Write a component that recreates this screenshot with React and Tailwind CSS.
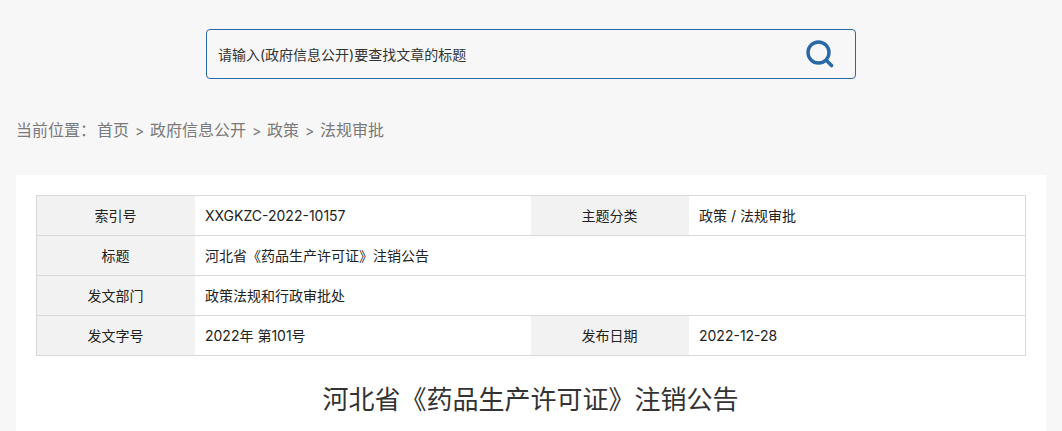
import React from "react";

function Label({ children }) {
  return <div className="w-[158px] shrink-0 bg-[#f2f2f2] flex items-center justify-center pr-[1px]">{children}</div>;
}
function Value({ children, grow }) {
  return <div className={grow ? "flex-1 flex items-center pl-[10px]" : "w-[336px] shrink-0 flex items-center pl-[10px]"}>{children}</div>;
}
function Row({ children, last }) {
  return <div className={last ? "flex h-[39px]" : "flex h-[40px] border-b border-[#d9d9d9]"}>{children}</div>;
}
function Sep() {
  return <span className="w-[21px] text-center text-[14px]">&gt;</span>;
}

export default function App() {
  return (
    <div className="h-[431px] overflow-hidden bg-[#f7f7f7] font-['Inter','Noto_Sans_CJK_SC',sans-serif]">
      <div className="pt-[29px] flex justify-center">
        <div className="w-[650px] h-[50px] border border-[#2b69a6] rounded-[4px] flex items-center justify-between pl-[11px] pr-[21px]">
          <span className="text-[14px] text-[#333] pt-[1px]">请输入(政府信息公开)要查找文章的标题</span>
          <svg width="28" height="28" viewBox="0 0 28 28" fill="none" stroke="#2b69a6" strokeLinecap="round">
            <circle cx="12.5" cy="12.5" r="10.5" strokeWidth="3.4" />
            <path d="M21 21l4.5 4.5" strokeWidth="3.6" />
          </svg>
        </div>
      </div>
      <div className="mt-[39px] pl-[16px] h-[24px] flex items-center text-[16px] text-[#7a7a7a]">
        <span>当前位置：</span><span className="ml-[1px]">首页</span>
        <Sep /><span>政府信息公开</span>
        <Sep /><span>政策</span>
        <Sep /><span>法规审批</span>
      </div>
      <div className="mt-[33px] mx-[16px] bg-white px-[20px] pt-[20px] h-[300px]">
        <div className="border border-[#d9d9d9] text-[14px] text-[#222]">
          <Row><Label>索引号</Label><Value>XXGKZC-2022-10157</Value><Label>主题分类</Label><Value grow>政策 / 法规审批</Value></Row>
          <Row><Label>标题</Label><Value grow>河北省《药品生产许可证》注销公告</Value></Row>
          <Row><Label>发文部门</Label><Value grow>政策法规和行政审批处</Value></Row>
          <Row last><Label>发文字号</Label><Value>2022年 第101号</Value><Label>发布日期</Label><Value grow>2022-12-28</Value></Row>
        </div>
        <h1 className="mt-[24px] pr-[1px] text-center text-[26px] leading-[40px] text-[#333]">河北省《药品生产许可证》注销公告</h1>
      </div>
    </div>
  );
}
